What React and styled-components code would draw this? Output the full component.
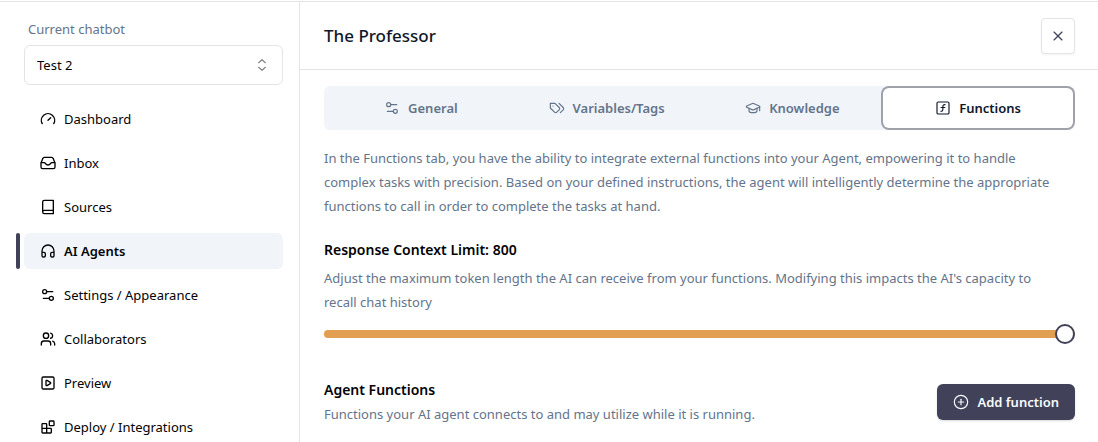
import React, { useState } from "react";
import styled, { createGlobalStyle, css } from "styled-components";
import {
  Gauge, Headphones, Settings2, Users, SquarePlay,
  X, GraduationCap, SquareFunction, CirclePlus,
} from "lucide-react";

const GlobalStyle = createGlobalStyle`
  * { box-sizing: border-box; }
  body {
    margin: 0;
    background: #fff;
    color: #020204;
    font-family: "Noto Sans", "Open Sans", sans-serif;
    font-size: 13px;
    line-height: 20px;
  }
  h1, h2, p, ul { margin: 0; padding: 0; }
  button, select, input { font: inherit; color: inherit; }
`;

const Glyph = ({ size = 16, strokeWidth = 2, children }) => (
  <svg
    width={size}
    height={size}
    viewBox="0 0 24 24"
    fill="none"
    stroke="currentColor"
    strokeWidth={strokeWidth}
    strokeLinecap="round"
    strokeLinejoin="round"
    aria-hidden="true"
  >
    {children}
  </svg>
);

const InboxIcon = (props) => (
  <Glyph {...props}>
    <path d="M1.5 12 4.2 5.4A2.6 2.6 0 0 1 6.6 3.5h10.8a2.6 2.6 0 0 1 2.4 1.9l2.7 6.6v6a2.5 2.5 0 0 1-2.5 2.500H4A2.5 2.5 0 0 1 1.5 18Z" />
    <path d="M2 11.500h4.500c1.500 0 2 3.500 5.500 3.500s4-3.500 5.500-3.500H22" />
  </Glyph>
);

const BookIcon = (props) => (
  <Glyph {...props}>
    <path d="M4 19.500v-15A2.500 2.500 0 0 1 6.500 2H20v20H6.500a2.500 2.500 0 0 1 0-5H20" />
  </Glyph>
);

const BlocksIcon = (props) => (
  <Glyph {...props}>
    <rect width="7" height="7" x="14" y="3" rx="1" />
    <path d="M10 21V8a1 1 0 0 0-1-1H4a1 1 0 0 0-1 1v12a1 1 0 0 0 1 1h12a1 1 0 0 0 1-1v-5a1 1 0 0 0-1-1H3" />
  </Glyph>
);

const TagsIcon = (props) => (
  <Glyph {...props}>
    <path d="M9 5H2v7l6.290 6.290c.94.94 2.480.94 3.420 0l3.580-3.580c.94-.94.94-2.480 0-3.420L9 5Z" />
    <path d="M6 9.010V9" />
    <path d="m15 5 6.300 6.300a2.400 2.400 0 0 1 0 3.400L17 19" />
  </Glyph>
);

const SortIcon = (props) => (
  <Glyph {...props}>
    <path d="m7 8.500 5-4.500 5 4.500" />
    <path d="m7 15.500 5 4.500 5-4.500" />
  </Glyph>
);

const Shell = styled.div`
  display: flex;
  min-height: calc(100vh - 1px);
  margin-top: 1px;
  border-top: 1px solid #e4e4e7;
`;

const Sidebar = styled.aside`
  flex: 0 0 300px;
  padding: 17px 16px 0;
  border-right: 1px solid #e4e4e7;
`;

const FieldLabel = styled.label`
  display: block;
  padding: 0 12px 6px;
  color: #64748b;
`;

const SelectWrap = styled.div`
  position: relative;
  margin-left: 8px;

  svg {
    position: absolute;
    top: 12px;
    right: 13px;
    color: #888;
    pointer-events: none;
  }
`;

const Select = styled.select`
  display: block;
  width: 100%;
  height: 40px;
  padding: 0 12px;
  appearance: none;
  background: #fff;
  border: 1px solid #e4e4e7;
  border-radius: 6px;
`;

const NavList = styled.ul`
  display: flex;
  flex-direction: column;
  gap: 8px;
  margin-top: 16px;
  list-style: none;
`;

const NavItem = styled.li`
  display: flex;
  gap: 4px;

  &::before {
    content: "";
    width: 4px;
    border-radius: 2px;
    background: ${(p) => (p.$active ? "#41425a" : "transparent")};
  }
`;

const NavLink = styled.a`
  flex: 1;
  display: flex;
  align-items: center;
  gap: 8px;
  height: 36px;
  padding: 0 16px;
  border-radius: 6px;
  color: inherit;
  text-decoration: none;
  ${(p) => p.$active && css`
    background: #f1f5f9;
    font-weight: 600;
  `}
`;

const Main = styled.main`
  flex: 1;
  min-width: 0;
`;

const Header = styled.header`
  display: flex;
  align-items: center;
  justify-content: space-between;
  height: 68px;
  padding: 0 23px 0 24px;
  border-bottom: 1px solid #e4e4e7;
`;

const Title = styled.h1`
  font-size: 17px;
  line-height: 24px;
  font-weight: 500;
  color: #0f172a;
`;

const CloseButton = styled.button`
  display: grid;
  place-items: center;
  width: 34px;
  height: 36px;
  padding: 0;
  background: #fff;
  border: 1px solid #e4e4e7;
  border-radius: 4px;
  color: #41425a;
  box-shadow: 0 1px 2px rgba(0, 0, 0, 0.05);
`;

const Content = styled.div`
  padding: 16px 23px 16px 24px;
`;

const TabList = styled.div`
  display: grid;
  grid-template-columns: repeat(4, 1fr);
  padding: 4px;
  border-radius: 6px;
  background: #f1f5f9;
`;

const Tab = styled.button`
  display: flex;
  align-items: center;
  justify-content: center;
  gap: 8px;
  height: 36px;
  padding: 0;
  border: 0;
  border-radius: 4px;
  background: transparent;
  color: #64748b;
  font-weight: 600;
  ${(p) => p.$active && css`
    background: #fff;
    color: #0f172a;
    box-shadow: 0 0 0 2px #fff, 0 0 0 4px #a1a1aa;
  `}
`;

const Text = styled.p`
  padding-right: 12px;
  color: #64748b;
  line-height: 24px;
`;

const Section = styled.section`
  margin-top: ${(p) => p.$top}px;
`;

const SectionTitle = styled.h2`
  display: block;
  font-size: 14px;
  line-height: 24px;
  font-weight: 600;
`;

const SliderField = styled.div`
  display: flex;
  flex-direction: column;
  gap: 4px;
`;

const Slider = styled.input`
  display: block;
  width: 100%;
  height: 20px;
  margin: 6px 0 0;
  appearance: none;
  background: transparent;

  &::-webkit-slider-runnable-track {
    height: 8px;
    border-radius: 4px;
    background: linear-gradient(#e39f51, #e39f51) no-repeat #f1f5f9;
    background-size: var(--fill) 100%;
  }

  &::-webkit-slider-thumb {
    appearance: none;
    width: 20px;
    height: 20px;
    margin-top: -6px;
    border: 2px solid #41425a;
    border-radius: 50%;
    background: #fff;
  }
`;

const FunctionsRow = styled.div`
  display: flex;
  align-items: center;
  justify-content: space-between;
  gap: 16px;
`;

const AddButton = styled.button`
  display: flex;
  align-items: center;
  gap: 8px;
  height: 36px;
  padding: 0 16px;
  border: 0;
  border-radius: 6px;
  background: #41425a;
  color: #f8fafc;
  font-weight: 600;
  white-space: nowrap;
  box-shadow: 0 1px 2px rgba(0, 0, 0, 0.15);
`;

const NAV = [
  ["Dashboard", Gauge],
  ["Inbox", InboxIcon],
  ["Sources", BookIcon],
  ["AI Agents", Headphones],
  ["Settings / Appearance", Settings2],
  ["Collaborators", Users],
  ["Preview", SquarePlay],
  ["Deploy / Integrations", BlocksIcon],
];

const TABS = [
  ["General", Settings2],
  ["Variables/Tags", TagsIcon],
  ["Knowledge", GraduationCap],
  ["Functions", SquareFunction],
];

const MAX_LIMIT = 800;

export default function App() {
  const [limit, setLimit] = useState(MAX_LIMIT);
  const [tab, setTab] = useState("Functions");

  return (
    <>
      <GlobalStyle />
      <Shell>
        <Sidebar>
          <FieldLabel htmlFor="chatbot">Current chatbot</FieldLabel>
          <SelectWrap>
            <Select id="chatbot">
              <option>Test 2</option>
            </Select>
            <SortIcon />
          </SelectWrap>
          <nav>
            <NavList>
              {NAV.map(([label, Icon]) => {
                const active = label === "AI Agents";
                return (
                  <NavItem key={label} $active={active}>
                    <NavLink href="#" $active={active} aria-current={active ? "page" : undefined}>
                      <Icon size={16} />
                      {label}
                    </NavLink>
                  </NavItem>
                );
              })}
            </NavList>
          </nav>
        </Sidebar>
        <Main>
          <Header>
            <Title>The Professor</Title>
            <CloseButton aria-label="Close"><X size={16} strokeWidth={1.75} /></CloseButton>
          </Header>
          <Content>
            <TabList role="tablist">
              {TABS.map(([label, Icon]) => (
                <Tab
                  key={label}
                  role="tab"
                  aria-selected={tab === label}
                  $active={tab === label}
                  onClick={() => setTab(label)}
                >
                  <Icon size={16} strokeWidth={1.75} />
                  {label}
                </Tab>
              ))}
            </TabList>
            <Section $top={16}>
              <Text>
                In the Functions tab, you have the ability to integrate external functions into your Agent, empowering it to handle complex tasks with precision. Based on your defined instructions, the agent will intelligently determine the appropriate functions to call in order to complete the tasks at hand.
              </Text>
            </Section>
            <Section $top={20}>
              <SliderField>
                <SectionTitle as="label" htmlFor="limit">Response Context Limit: {limit}</SectionTitle>
                <Text>
                  Adjust the maximum token length the AI can receive from your functions. Modifying this impacts the AI's capacity to recall chat history
                </Text>
                <Slider
                  id="limit"
                  type="range"
                  min={0}
                  max={MAX_LIMIT}
                  value={limit}
                  onChange={(e) => setLimit(Number(e.target.value))}
                  style={{ "--fill": `${(limit / MAX_LIMIT) * 100}%` }}
                />
              </SliderField>
            </Section>
            <Section $top={34}>
              <FunctionsRow>
                <div>
                  <SectionTitle>Agent Functions</SectionTitle>
                  <Text>Functions your AI agent connects to and may utilize while it is running.</Text>
                </div>
                <AddButton><CirclePlus size={16} strokeWidth={1.75} />Add function</AddButton>
              </FunctionsRow>
            </Section>
          </Content>
        </Main>
      </Shell>
    </>
  );
}
